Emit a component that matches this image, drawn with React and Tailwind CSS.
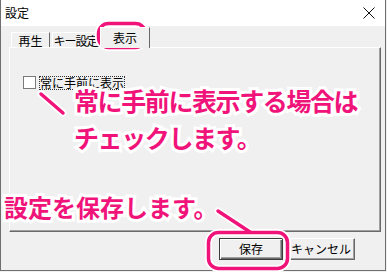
import React from "react";

const PINK = "#f0147a";

function Tab({ label, w, selected, extra = "" }) {
  if (selected) {
    return (
      <div
        className={`relative z-10 -mb-[1px] ml-[-1px] h-[21px] ${w} flex items-start justify-center pt-[3px] bg-[#f0f0f0] border-t border-l border-white border-r border-r-[#696969] text-[12px] leading-[14px] text-black whitespace-nowrap`}
      >
        {label}
      </div>
    );
  }
  return (
    <div
      className={`h-[15px] ${w} flex items-start justify-center pt-[1px] bg-[#f0f0f0] border-t border-l border-white border-r border-r-[#696969] text-[12px] leading-[13px] text-black whitespace-nowrap ${extra}`}
    >
      {label}
    </div>
  );
}

export default function App() {
  const ann =
    "[paint-order:stroke_fill] [-webkit-text-stroke:6px_white] font-bold text-[#f0147a] whitespace-nowrap";
  return (
    <div
      className="relative w-[387px] h-[272px] overflow-hidden bg-[#f0f0f0]"
      style={{ fontFamily: '"Noto Sans CJK JP", "Noto Sans", sans-serif' }}
    >
      <div className="w-[386px] h-[271px] flex flex-col border-l border-r border-b border-[#6f6f6f]">
        {/* title bar */}
        <div className="h-[26px] flex-none bg-white flex items-center justify-between pl-[4px] pr-[10px]">
          <span className="text-[12px] leading-none text-black">設定</span>
          <svg width="12" height="12" viewBox="0 0 12 12">
            <path d="M0.5 0.5 L11.5 11.5 M11.5 0.5 L0.5 11.5" stroke="#111" strokeWidth="1" />
          </svg>
        </div>
        {/* body */}
        <div className="flex-1 flex flex-col pl-[8px] pr-[4px]">
          <div className="h-[21px] flex items-end pl-[2px] gap-[2px]">
            <Tab label="再生" w="w-[39px]" />
            <Tab label="キー設定" w="w-[47px]" extra="tracking-[-1px]" />
            <Tab label="表示" w="w-[50px]" selected />
          </div>
          <div className="h-[185px] flex-none border border-t-white border-l-white border-r-[#696969] border-b-[#696969] shadow-[inset_-1px_-1px_0_#a0a0a0] pl-[13px] pt-[28px]">
            <div className="flex items-center gap-[4px]">
              <div className="w-[13px] h-[13px] bg-white border border-[#7a7a7a]" />
              <span className="text-[12px] leading-[12px] text-black outline-1 outline-dotted outline-[#333] outline-offset-0">
                常に手前に表示
              </span>
            </div>
          </div>
          <div className="mt-[6px] flex justify-end gap-[4px] pr-[26px]">
            <button className="w-[64px] h-[22px] bg-[#f0f0f0] border border-[#3c3c3c] shadow-[inset_1px_1px_0_#ffffff,inset_-1px_-1px_0_#696969,inset_-2px_-2px_0_#a0a0a0] text-[12px] leading-none text-black">
              保存
            </button>
            <button className="w-[68px] h-[22px] bg-[#f0f0f0] border border-t-white border-l-white border-r-[#696969] border-b-[#696969] shadow-[inset_-1px_-1px_0_#a0a0a0] text-[12px] leading-none text-black">
              キャンセル
            </button>
          </div>
        </div>
      </div>

      {/* annotations overlay */}
      <svg className="absolute inset-0 pointer-events-none" width="387" height="272">
        <g fill="none" stroke="white" strokeWidth="7" strokeLinecap="round">
          <rect x="98.5" y="23.5" width="47" height="24" rx="10" />
          <rect x="208.5" y="232.5" width="79" height="36" rx="10" />
          <line x1="41" y1="94" x2="63" y2="113" />
          <line x1="218" y1="211" x2="250" y2="232" />
        </g>
        <g fill="none" stroke={PINK} strokeWidth="3.5" strokeLinecap="round">
          <rect x="98.5" y="23.5" width="47" height="24" rx="10" />
          <rect x="208.5" y="232.5" width="79" height="36" rx="10" />
          <line x1="41" y1="94" x2="63" y2="113" />
          <line x1="218" y1="211" x2="250" y2="232" />
        </g>
      </svg>
      <div className="absolute left-[74px] top-[88px] flex flex-col gap-[13px]">
        <div className={`text-[25px] leading-[24px] tracking-[-1.4px] ${ann}`}>常に手前に表示する場合は</div>
        <div className={`text-[25px] leading-[24px] tracking-[-1.4px] ${ann}`}>チェックします。</div>
      </div>
      <div className={`absolute left-[4px] top-[196px] text-[24px] leading-[22px] tracking-[0px] ${ann}`}>
        設定を保存します。
      </div>
    </div>
  );
}
